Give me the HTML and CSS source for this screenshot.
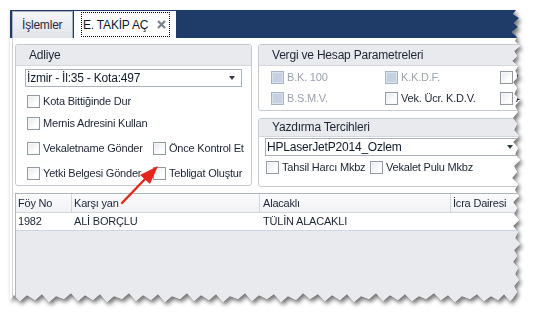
FILE: index.html
```html
<!DOCTYPE html>
<html>
<head>
  <meta charset="utf-8">
  <title>E. Takip Aç</title>
  <link rel="stylesheet" href="styles.css">
</head>
<body>
  <div class="shot">
    <div class="wrap">
      <div class="frame">
        <div class="tabbar">
          <div class="tab plain">İşlemler</div>
          <div class="tab active">
            <div class="focus">
              <span>E. TAKİP AÇ</span>
              <svg class="close" width="9" height="9" viewBox="0 0 9 9"><path d="M1 1L8 8M8 1L1 8" stroke="#7c828b" stroke-width="2.2"/></svg>
            </div>
          </div>
        </div>

        <div class="page">
          <div class="top">
            <section class="group adliye">
              <div class="group-head">Adliye</div>
              <div class="group-body">
                <div class="combo"><span>İzmir - İl:35 - Kota:497</span><span class="drop"></span></div>
                <div class="cb-grid">
                  <label class="cb r1"><span class="box"></span>Kota Bittiğinde Dur</label>
                  <label class="cb r2 wide"><span class="box"></span>Mernis Adresini Kullan</label>
                  <label class="cb r3"><span class="box"></span>Vekaletname Gönder</label>
                  <label class="cb r3"><span class="box"></span>Önce Kontrol Et</label>
                  <label class="cb r3"><span class="box"></span>Yetki Belgesi Gönder</label>
                  <label class="cb r3"><span class="box"></span>Tebligat Oluştur</label>
                </div>
              </div>
            </section>

            <div class="right">
              <section class="group vergi">
                <div class="group-head">Vergi ve Hesap Parametreleri</div>
                <div class="vergi-grid">
                  <label class="cb off"><span class="box"></span>B.K. 100</label>
                  <label class="cb off"><span class="box"></span>K.K.D.F.</label>
                  <label class="cb"><span class="box"></span>Masraf K.D.V.</label>
                  <label class="cb off"><span class="box"></span>B.S.M.V.</label>
                  <label class="cb"><span class="box"></span>Vek. Ücr. K.D.V.</label>
                  <label class="cb"><span class="box"></span>Avans K.D.V.</label>
                </div>
              </section>

              <section class="group yazdirma">
                <div class="group-head small">Yazdırma Tercihleri</div>
                <div class="group-body">
                  <div class="combo long"><span>HPLaserJetP2014_Ozlem</span><span class="drop"></span></div>
                  <div class="print-row">
                    <label class="cb"><span class="box"></span>Tahsil Harcı Mkbz</label>
                    <label class="cb"><span class="box"></span>Vekalet Pulu Mkbz</label>
                  </div>
                </div>
              </section>
            </div>
          </div>

          <div class="grid">
            <div class="grid-head">
              <div class="col c1">Föy No</div>
              <div class="col c2">Karşı yan</div>
              <div class="col c3">Alacaklı</div>
              <div class="col c4">İcra Dairesi</div>
            </div>
            <div class="grid-row">
              <div class="col c1">1982</div>
              <div class="col c2">ALİ BORÇLU</div>
              <div class="col c3">TÜLİN ALACAKLI</div>
              <div class="col c4"></div>
            </div>
          </div>
        </div>
      </div>
    </div>

    <svg class="pointer" width="538" height="327" viewBox="0 0 538 327">
      <line x1="122" y1="203" x2="148" y2="176" stroke="#e5261e" stroke-width="2.4" stroke-linecap="round"/>
      <polygon points="158,166 150,184 140,175" fill="#e5261e"/>
    </svg>
  </div>
</body>
</html>
```

FILE: styles.css
```css
body {
  margin: 0;
  background: #fff;
  font-family: "Liberation Sans", Arial, sans-serif;
  font-size: 11px;
  letter-spacing: -0.2px;
  color: #1d2636;
}

.shot {
  position: relative;
  width: 538px;
  height: 327px;
  overflow: hidden;
}

.wrap {
  padding: 10px 0 0 10px;
  filter: drop-shadow(2px 3px 2px rgba(0, 0, 0, 0.55));
}

/* torn right and bottom edge */
.frame {
  width: 516px;
  height: 295px;
  background: #fff;
  display: flex;
  flex-direction: column;
  overflow: hidden;
  clip-path: polygon(0 0, 506px 0, 503px 4px, 509px 8px, 504px 13px, 508px 17px, 502px 22px, 507px 27px, 505px 31px, 510px 36px, 504px 41px, 507px 46px, 502px 51px, 508px 56px, 505px 61px, 509px 66px, 503px 72px, 507px 78px, 504px 84px, 510px 90px, 505px 96px, 508px 102px, 503px 108px, 507px 114px, 504px 120px, 509px 126px, 503px 132px, 508px 138px, 505px 144px, 510px 150px, 504px 156px, 507px 162px, 502px 168px, 508px 174px, 505px 180px, 509px 186px, 503px 192px, 507px 198px, 504px 204px, 509px 210px, 503px 216px, 508px 222px, 505px 228px, 510px 234px, 504px 240px, 507px 246px, 503px 252px, 508px 258px, 505px 264px, 509px 270px, 504px 276px, 507px 282px, 503px 288px, 500px 291px, 494px 284px, 488px 290px, 481px 286px, 474px 291px, 467px 284px, 460px 289px, 452px 286px, 445px 292px, 438px 285px, 431px 290px, 424px 283px, 416px 289px, 409px 286px, 402px 291px, 395px 284px, 388px 290px, 380px 285px, 373px 291px, 366px 283px, 359px 289px, 351px 286px, 344px 292px, 337px 284px, 330px 290px, 322px 285px, 315px 291px, 308px 284px, 300px 289px, 293px 283px, 286px 290px, 278px 286px, 271px 292px, 264px 284px, 257px 289px, 249px 285px, 242px 291px, 235px 283px, 228px 289px, 220px 286px, 213px 292px, 206px 284px, 199px 290px, 191px 285px, 184px 291px, 177px 283px, 170px 289px, 162px 286px, 155px 292px, 148px 284px, 141px 290px, 133px 285px, 126px 291px, 119px 283px, 112px 289px, 104px 286px, 97px 292px, 90px 284px, 83px 290px, 75px 285px, 68px 291px, 61px 283px, 54px 289px, 46px 286px, 39px 292px, 32px 284px, 25px 290px, 17px 285px, 10px 291px, 4px 285px, 0 290px);
}

/* tabs */
.tabbar {
  flex: none;
  height: 28px;
  background: #1f3b68;
  display: flex;
  align-items: flex-end;
  padding-left: 2px;
  gap: 1px;
}

.tab {
  height: 27px;
  box-sizing: border-box;
  display: flex;
  font-size: 12px;
}

.tab.plain {
  width: 61px;
  align-items: center;
  padding-left: 9px;
  background: linear-gradient(#f4f5f7, #e2e4e9);
  border: 1px solid #aab1bc;
  border-bottom: none;
  color: #1f2a3c;
}

.tab.active {
  width: 102px;
  background: #fff;
  padding: 1px 0 0 7px;
}

.focus {
  width: 89px;
  height: 25px;
  box-sizing: border-box;
  border: 1px dotted #000;
  display: flex;
  align-items: center;
  justify-content: space-between;
  padding: 0 3px 0 1px;
  color: #0f1a2c;
}

/* page */
.page {
  flex: 1;
  min-height: 0;
  margin-left: 2px;
  border-left: 1px solid #cdd1d8;
  padding: 6px 0 0 2px;
  display: flex;
  flex-direction: column;
  gap: 6px;
}

.top {
  flex: none;
  height: 143px;
  display: flex;
  align-items: flex-start;
  gap: 6px;
}

.group {
  box-sizing: border-box;
  border: 1px solid #c4c9d2;
  border-radius: 3px;
  background: #fff;
  overflow: hidden;
}

.group-head {
  height: 20px;
  line-height: 20px;
  padding-left: 13px;
  background: #e9eaee;
  border-bottom: 1px solid #d3d6dc;
  color: #1c2434;
  font-size: 12px;
}

.group-head.small {
  height: 17px;
  line-height: 17px;
}

.adliye {
  flex: none;
  width: 237px;
  height: 142px;
}

.adliye .group-body {
  padding: 3px 0 0 9px;
}

.combo {
  width: 217px;
  height: 18px;
  box-sizing: border-box;
  border: 1px solid #a9b0bb;
  background: #fff;
  display: flex;
  align-items: center;
  justify-content: space-between;
  padding: 0 6px 0 1px;
  color: #111a28;
  font-size: 12px;
}

.combo.long {
  width: 255px;
}

.drop {
  width: 0;
  height: 0;
  border-left: 3px solid transparent;
  border-right: 3px solid transparent;
  border-top: 4px solid #333a45;
}

.cb {
  height: 20px;
  display: flex;
  align-items: center;
  white-space: nowrap;
  color: #1b2333;
}

.box {
  flex: none;
  width: 13px;
  height: 13px;
  box-sizing: border-box;
  margin-right: 3px;
  border: 1px solid #939aa4;
  background: linear-gradient(135deg, #e4e6ea, #fff 70%);
  box-shadow: inset 0 0 0 1px #f7f8f9;
}

.cb.off {
  color: #9aa2ae;
}

.cb.off .box {
  border-color: #a8b4c6;
  background: #c5d0e1;
  box-shadow: inset 0 0 0 1px #dbe2ec;
}

.cb-grid {
  display: grid;
  grid-template-columns: 126px auto;
  padding-left: 2px;
}

.cb-grid .wide {
  grid-column: span 2;
}

.cb-grid .r1 {
  grid-column: span 2;
  margin-top: 4px;
}

.cb-grid .r2 {
  margin-top: 2px;
}

.cb-grid .r3 {
  margin-top: 5px;
}

.right {
  flex: 1;
  min-width: 0;
  display: flex;
  flex-direction: column;
  gap: 7px;
}

.vergi {
  height: 67px;
}

.vergi-grid {
  display: grid;
  grid-template-columns: 114px 115px 100px;
  grid-auto-rows: 20px;
  row-gap: 1px;
  padding: 1px 0 0 12px;
}

.yazdirma {
  height: 69px;
}

.yazdirma .group-body {
  padding: 1px 0 0 6px;
}

.print-row {
  display: grid;
  grid-template-columns: 104px auto;
  margin-top: 1px;
  padding-left: 1px;
}

/* grid */
.grid {
  flex: 1;
  border-top: 1px solid #aeb4be;
  border-left: 1px solid #aeb4be;
  background: #e9eaee;
  color: #1b2435;
}

.grid-head,
.grid-row {
  display: flex;
}

.grid-head {
  height: 18px;
  line-height: 18px;
  background: linear-gradient(#fbfbfc, #f1f2f5);
  border-bottom: 1px solid #d3d7dd;
}

.grid-head .col {
  border-right: 1px solid #d3d7dd;
}

.grid-row {
  height: 17px;
  line-height: 17px;
  background: #fff;
  border-bottom: 1px solid #c9d6e8;
}

.col {
  flex: none;
  box-sizing: border-box;
  padding-left: 2px;
  white-space: nowrap;
  overflow: hidden;
}

.c1 { width: 56px; }
.c2 { width: 188px; }
.c3 { width: 191px; padding-left: 3px; }
.c4 { width: 120px; }

.pointer {
  position: absolute;
  left: 0;
  top: 0;
  pointer-events: none;
}
```
